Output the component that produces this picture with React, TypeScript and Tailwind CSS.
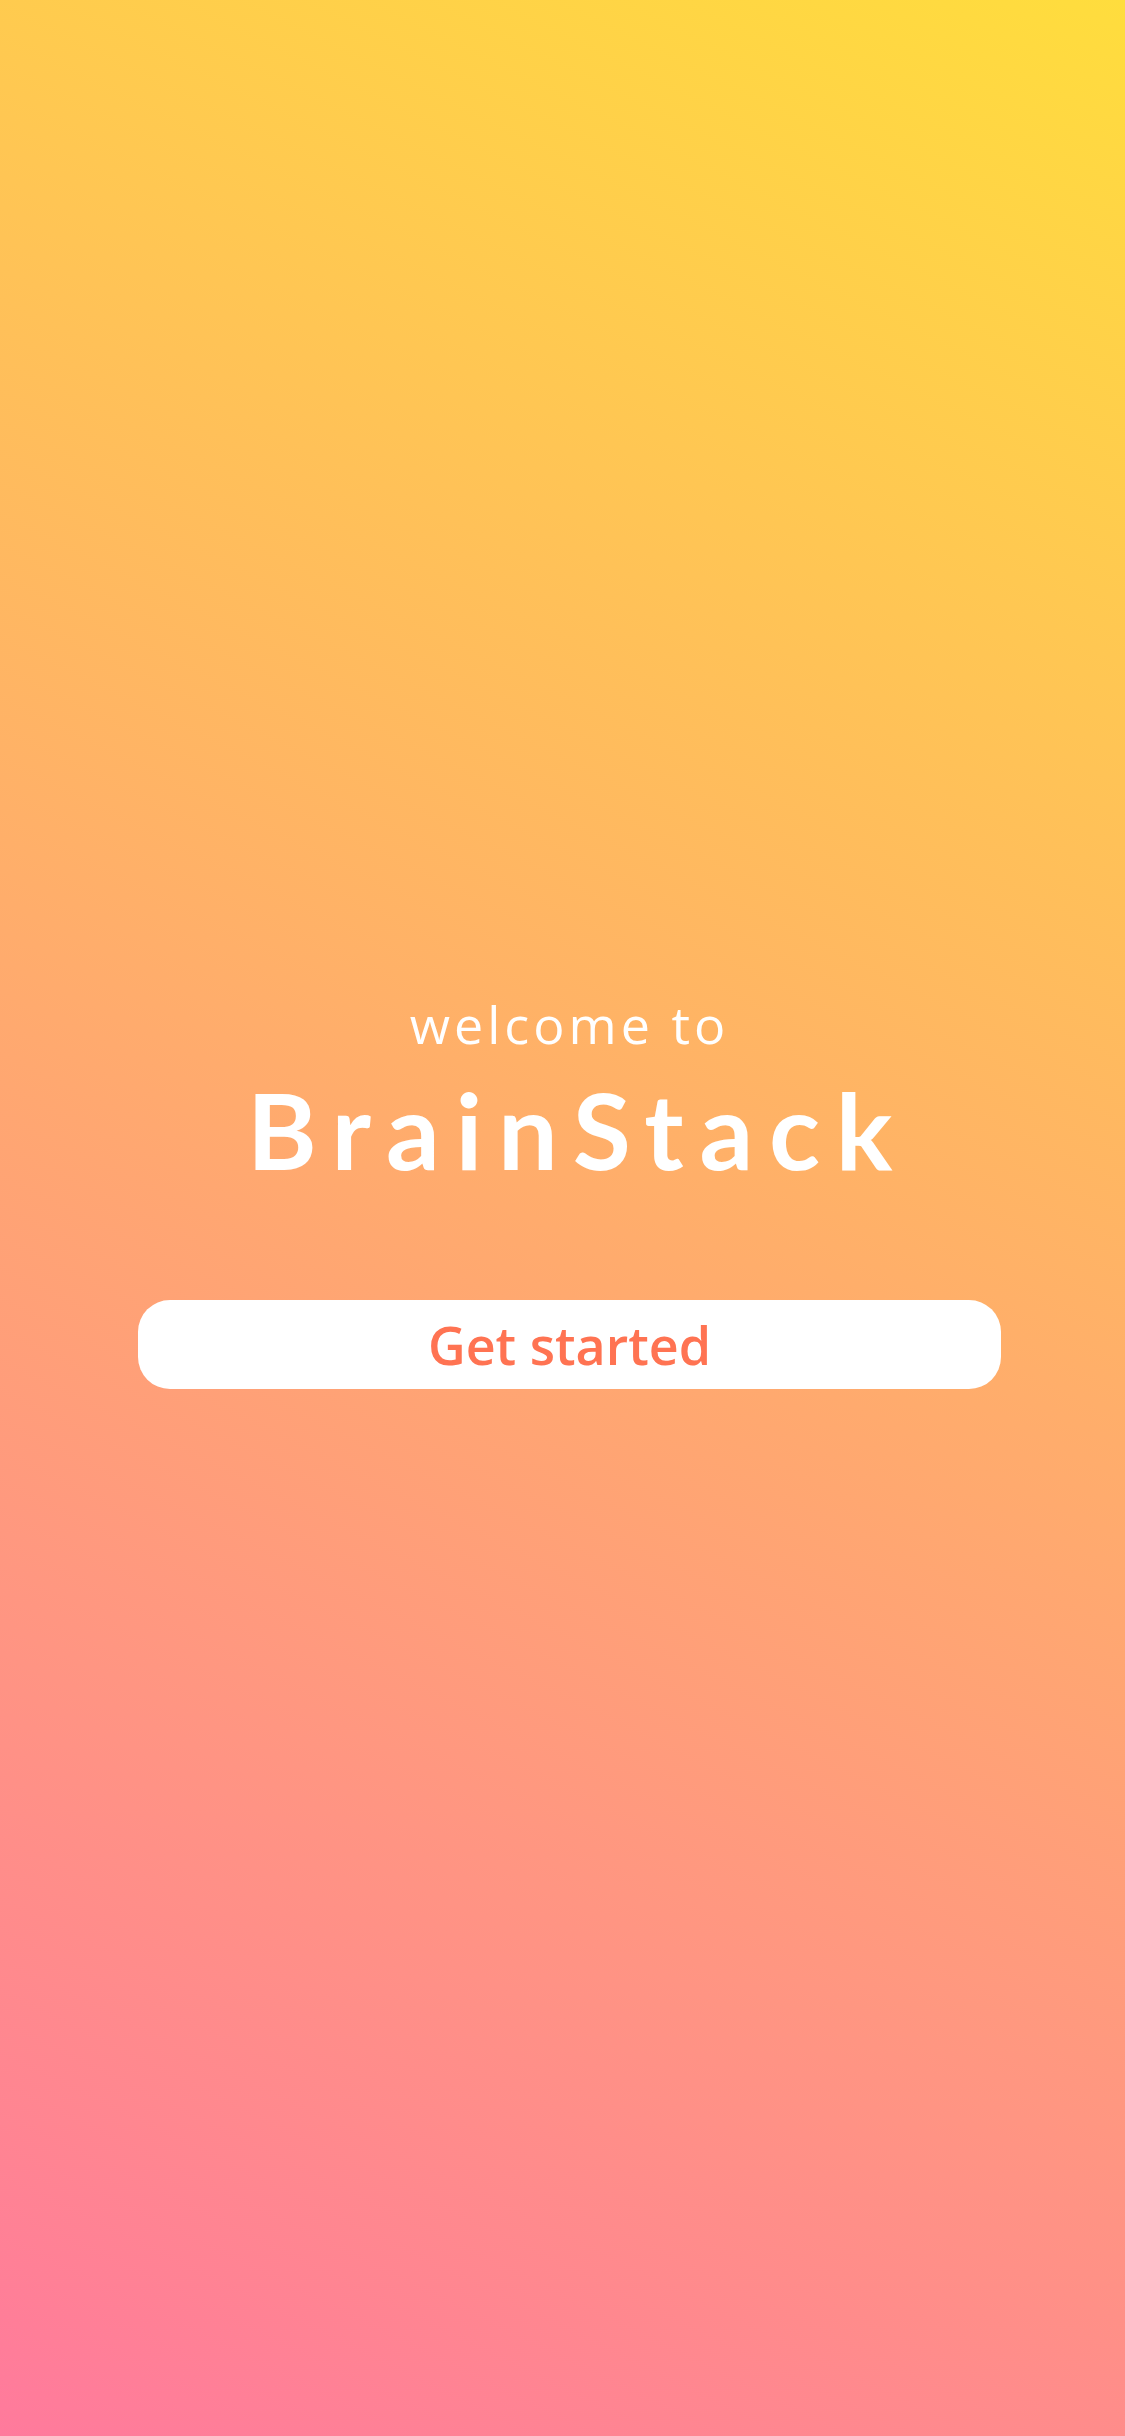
import React from 'react';

const App: React.FC = () => {
  return (
    <div className="w-full h-[2436px] bg-[linear-gradient(26deg,#FF7A9C_0%,#FFDD3D_100%)] flex flex-col items-center font-['Open_Sans','Liberation_Sans',sans-serif]">
      <div className="ml-[14px] flex flex-col items-center">
        <div className="pt-[998px] flex flex-col items-center text-white">
          <p className="text-[52px] leading-none font-normal tracking-[4px]">welcome to</p>
          <h1 className="mt-[26px] font-['Lato','Liberation_Sans',sans-serif] text-[106px] leading-none font-bold tracking-[15.7px] pl-[16px]">BrainStack</h1>
        </div>
        <button className="mt-[118px] w-[863px] h-[89px] rounded-[32px] bg-white flex items-center justify-center text-[52px] font-semibold text-[#FF7352] leading-none">
          Get started
        </button>
      </div>
    </div>
  );
};

export default App;
